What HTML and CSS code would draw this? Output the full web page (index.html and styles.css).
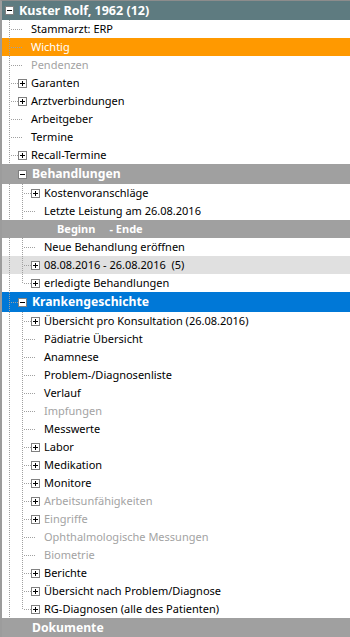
FILE: index.html
```html
<!DOCTYPE html>
<html lang="de">
<head>
    <meta charset="UTF-8">
    <meta name="viewport" content="width=device-width, initial-scale=1.0">
    <title>Patient</title>
    <link rel="stylesheet" href="styles.css">
</head>
<body>
    <div class="tree">
        <div class="row head root">
            <span class="c"><span class="box minus"></span></span>
            <span class="label">Kuster Rolf, 1962 (12)</span>
        </div>
        <div class="row"><span class="c t"></span><span class="c h"></span><span class="label">Stammarzt: ERP</span></div>
        <div class="row mark"><span class="c t"></span><span class="c h"></span><span class="label">Wichtig</span></div>
        <div class="row off"><span class="c t"></span><span class="c h"></span><span class="label">Pendenzen</span></div>
        <div class="row"><span class="c t"></span><span class="c hb"><span class="box plus"></span></span><span class="label">Garanten</span></div>
        <div class="row"><span class="c t"></span><span class="c hb"><span class="box plus"></span></span><span class="label">Arztverbindungen</span></div>
        <div class="row"><span class="c t"></span><span class="c h"></span><span class="label">Arbeitgeber</span></div>
        <div class="row"><span class="c t"></span><span class="c h"></span><span class="label">Termine</span></div>
        <div class="row"><span class="c t"></span><span class="c hb"><span class="box plus"></span></span><span class="label">Recall-Termine</span></div>

        <!-- Behandlungen -->
        <div class="row head"><span class="c t"></span><span class="c hb"><span class="box minus"></span></span><span class="label">Behandlungen</span></div>
        <div class="row"><span class="c v"></span><span class="c t"></span><span class="c hb"><span class="box plus"></span></span><span class="label">Kostenvoranschläge</span></div>
        <div class="row"><span class="c v"></span><span class="c t"></span><span class="c h"></span><span class="label">Letzte Leistung am 26.08.2016</span></div>
        <div class="row cols"><span class="c v"></span><span class="c v"></span><span class="label">Beginn<span class="to">- Ende</span></span></div>
        <div class="row"><span class="c v"></span><span class="c t"></span><span class="c h"></span><span class="label">Neue Behandlung eröffnen</span></div>
        <div class="row sel"><span class="c v"></span><span class="c t"></span><span class="c hb"><span class="box plus"></span></span><span class="label">08.08.2016 - 26.08.2016  (5)</span></div>
        <div class="row"><span class="c v"></span><span class="c l"></span><span class="c hb"><span class="box plus"></span></span><span class="label">erledigte Behandlungen</span></div>

        <!-- Krankengeschichte -->
        <div class="row head blue"><span class="c t"></span><span class="c hb"><span class="box minus"></span></span><span class="label">Krankengeschichte</span></div>
        <div class="row"><span class="c v"></span><span class="c t"></span><span class="c hb"><span class="box plus"></span></span><span class="label">Übersicht pro Konsultation (26.08.2016)</span></div>
        <div class="row"><span class="c v"></span><span class="c t"></span><span class="c h"></span><span class="label">Pädiatrie Übersicht</span></div>
        <div class="row"><span class="c v"></span><span class="c t"></span><span class="c h"></span><span class="label">Anamnese</span></div>
        <div class="row"><span class="c v"></span><span class="c t"></span><span class="c h"></span><span class="label">Problem-/Diagnosenliste</span></div>
        <div class="row"><span class="c v"></span><span class="c t"></span><span class="c h"></span><span class="label">Verlauf</span></div>
        <div class="row off"><span class="c v"></span><span class="c t"></span><span class="c h"></span><span class="label">Impfungen</span></div>
        <div class="row"><span class="c v"></span><span class="c t"></span><span class="c h"></span><span class="label">Messwerte</span></div>
        <div class="row"><span class="c v"></span><span class="c t"></span><span class="c hb"><span class="box plus"></span></span><span class="label">Labor</span></div>
        <div class="row"><span class="c v"></span><span class="c t"></span><span class="c hb"><span class="box plus"></span></span><span class="label">Medikation</span></div>
        <div class="row"><span class="c v"></span><span class="c t"></span><span class="c hb"><span class="box plus"></span></span><span class="label">Monitore</span></div>
        <div class="row off"><span class="c v"></span><span class="c t"></span><span class="c hb"><span class="box plus"></span></span><span class="label">Arbeitsunfähigkeiten</span></div>
        <div class="row off"><span class="c v"></span><span class="c t"></span><span class="c hb"><span class="box plus"></span></span><span class="label">Eingriffe</span></div>
        <div class="row off"><span class="c v"></span><span class="c t"></span><span class="c h"></span><span class="label">Ophthalmologische Messungen</span></div>
        <div class="row off"><span class="c v"></span><span class="c t"></span><span class="c h"></span><span class="label">Biometrie</span></div>
        <div class="row"><span class="c v"></span><span class="c t"></span><span class="c hb"><span class="box plus"></span></span><span class="label">Berichte</span></div>
        <div class="row"><span class="c v"></span><span class="c t"></span><span class="c hb"><span class="box plus"></span></span><span class="label">Übersicht nach Problem/Diagnose</span></div>
        <div class="row"><span class="c v"></span><span class="c l"></span><span class="c hb"><span class="box plus"></span></span><span class="label">RG-Diagnosen (alle des Patienten)</span></div>

        <div class="row head"><span class="c l"></span><span class="c h"></span><span class="label">Dokumente</span></div>
    </div>
</body>
</html>
```

FILE: styles.css
```css
:root {
    --dotv: repeating-linear-gradient(to bottom, #a0a0a0 0 1px, transparent 1px 2px);
    --doth: repeating-linear-gradient(to right, #a0a0a0 0 1px, transparent 1px 2px);
}

body {
    margin: 0;
    background: #fff;
    color: #000;
    font-family: "Noto Sans", sans-serif;
    font-size: 11px;
}

.tree {
    height: 636px;
    overflow: hidden;
    border-top: 1px solid #8c8c8c;
    border-left: 2px solid #9c9c9c;
}

.row {
    display: flex;
    height: 18px;
}

.label {
    padding-left: 3px;
    line-height: 18px;
    white-space: pre;
}

/* section headers */
.head {
    height: 20px;
    background: #a0a0a0;
    color: #fff;
    font-weight: bold;
    font-size: 12.2px;
}

.head .label {
    padding-left: 4px;
    line-height: 20px;
}

.root {
    height: 19px;
    background: #5e7b80;
    font-size: 12.5px;
}

.root .label {
    line-height: 19px;
}

.blue {
    background: #0078d7;
}

.mark {
    background: #ff9900;
    color: #fff;
}

.off {
    color: #a3a3a3;
}

.sel {
    background: #e0e0e0;
}

.cols {
    background: #a0a0a0;
    color: #fff;
    font-weight: bold;
}

.cols .label {
    padding-left: 29px;
}

.cols .to {
    margin-left: 14px;
}

/* tree lines */
.c {
    flex: none;
    width: 13px;
    display: flex;
    align-items: center;
    background-repeat: no-repeat;
}

.v {
    background-image: var(--dotv);
    background-position: 7px 0;
    background-size: 1px 100%;
}

.t {
    background-image: var(--dotv), var(--doth);
    background-position: 7px 0, 9px 50%;
    background-size: 1px 100%, 4px 1px;
}

.l {
    background-image: var(--dotv), var(--doth);
    background-position: 7px 0, 9px 50%;
    background-size: 1px 50%, 4px 1px;
}

.h {
    background-image: var(--doth);
    background-position: 0 50%;
    background-size: 8px 1px;
}

.hb {
    background-image: var(--doth);
    background-position: 0 50%;
    background-size: 3px 1px;
}

.box {
    width: 7px;
    height: 7px;
    margin-left: 3px;
    border: 1px solid #808080;
    background: #fff;
}

.minus {
    background: linear-gradient(#000, #000) center / 5px 1px no-repeat, #fff;
}

.plus {
    background: linear-gradient(#000, #000) center / 5px 1px no-repeat,
                linear-gradient(#000, #000) center / 1px 5px no-repeat, #fff;
}
```
